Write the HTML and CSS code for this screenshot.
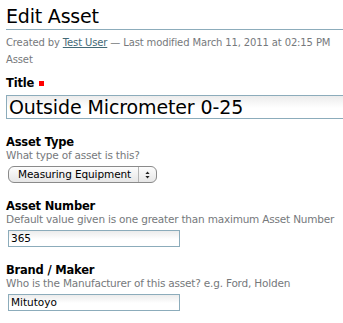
FILE: index.html
```html
<!DOCTYPE html>
<html>
<head>
<meta charset="utf-8">
<link rel="stylesheet" href="styles.css">
</head>
<body>
<div class="page">
  <h1 class="title">Edit Asset</h1>
  <div class="byline">Created by <a href="#" class="author">Test User</a> — Last modified March 11, 2011 at 02:15 PM</div>
  <div class="type-line">Asset</div>

  <div class="field first">
    <div class="label">Title <span class="required"></span></div>
    <div class="input big">Outside Micrometer 0-25</div>
  </div>

  <div class="field">
    <div class="label">Asset Type</div>
    <div class="help">What type of asset is this?</div>
    <div class="select">
      <span class="select-text">Measuring Equipment</span>
      <span class="select-arrows">
        <svg width="5" height="8" viewBox="0 0 5 8"><path d="M2.5 0.5 L4.6 3 L0.4 3 Z M2.5 7.5 L4.6 5 L0.4 5 Z" fill="#222"/></svg>
      </span>
    </div>
  </div>

  <div class="field">
    <div class="label">Asset Number</div>
    <div class="help nowrap">Default value given is one greater than maximum Asset Number</div>
    <div class="input small">365</div>
  </div>

  <div class="field">
    <div class="label">Brand / Maker</div>
    <div class="help">Who is the Manufacturer of this asset? e.g. Ford, Holden</div>
    <div class="input small">Mitutoyo</div>
  </div>
</div>
</body>
</html>
```
FILE: styles.css
```css
html, body {
  margin: 0;
  padding: 0;
  background: #fff;
  overflow: hidden;
}
body {
  font-family: "DejaVu Sans", Verdana, sans-serif;
  color: #000;
}
.page {
  padding: 4px 0 0 6px;
  width: 420px;
}
.title {
  margin: 0;
  font-size: 19px;
  font-weight: normal;
  line-height: 25px;
  border-bottom: 1px solid #8cacbb;
  letter-spacing: -0.2px;
}
.byline, .type-line {
  font-size: 10px;
  color: #76797c;
  letter-spacing: -0.13px;
}
.byline {
  line-height: 14px;
  margin-top: 6px;
}
.author {
  color: #436976;
  text-decoration: underline;
}
.type-line {
  line-height: 14px;
  margin-top: 3px;
}
.field {
  margin-top: 16px;
}
.field.first {
  margin-top: 9px;
}
.label {
  font-size: 11.5px;
  font-weight: bold;
  line-height: 14px;
  letter-spacing: -0.2px;
}
.required {
  display: inline-block;
  width: 5px;
  height: 5px;
  background: #f00;
  margin-left: 1px;
  vertical-align: 1px;
}
.help {
  font-size: 10.5px;
  color: #76797c;
  line-height: 13px;
  letter-spacing: -0.2px;
}
.nowrap { white-space: nowrap; }
.input {
  border: 1px solid #8cacbb;
  background: linear-gradient(#ececec, #fff 55%);
  box-sizing: border-box;
}
.input.big {
  margin-top: 5px;
  height: 24px;
  font-size: 19px;
  line-height: 22px;
  padding-left: 2px;
  letter-spacing: -0.12px;
}
.input.small {
  margin: 4px 0 0 2px;
  width: 172px;
  height: 17px;
  font-size: 10.5px;
  line-height: 15px;
  padding-left: 2px;
}
.select {
  display: flex;
  align-items: stretch;
  margin: 4px 0 0 2px;
  width: 149px;
  height: 17px;
  box-sizing: border-box;
  border: 1px solid #8a8a8a;
  border-radius: 6px;
  background: linear-gradient(#fdfdfd, #e6e6e6);
  font-size: 10.5px;
}
.select-text {
  flex: 1;
  padding-left: 9px;
  line-height: 15px;
  letter-spacing: -0.1px;
  border-right: 1px solid #b5b5b5;
}
.select-arrows {
  width: 17px;
  display: flex;
  align-items: center;
  justify-content: center;
}
.select-arrows svg { display: block; }
```
